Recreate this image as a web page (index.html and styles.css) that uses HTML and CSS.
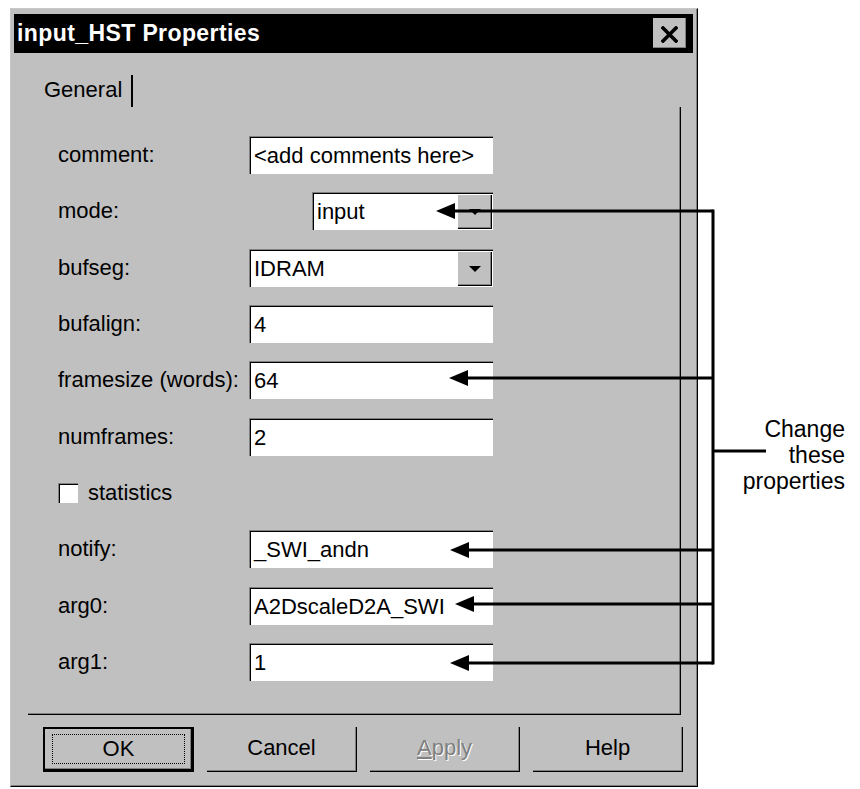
FILE: index.html
```html
<!DOCTYPE html>
<html lang="en">
<head>
  <meta charset="UTF-8" />
  <meta name="viewport" content="width=device-width, initial-scale=1.0" />
  <title>input_HST Properties</title>
  <link rel="stylesheet" href="styles.css">
</head>
<body>
  <div class="page">
    <div class="dialog">
      <div class="titlebar">
        <span class="title">input_HST Properties</span>
        <span class="close">
          <svg width="17" height="17" viewBox="0 0 17 17"><path d="M2 2 L15 15 M15 2 L2 15" stroke="#000" stroke-width="3.6" stroke-linecap="square"/></svg>
        </span>
      </div>
      <div class="tabs"><div class="tab">General</div></div>
      <div class="panel">
        <div class="form">
          <label>comment:</label>
          <div class="field">&lt;add comments here&gt;</div>

          <label>mode:</label>
          <div class="combo combo-short"><span class="combo-value">input</span><span class="combo-btn"><i class="caret"></i></span></div>

          <label>bufseg:</label>
          <div class="combo"><span class="combo-value">IDRAM</span><span class="combo-btn"><i class="caret"></i></span></div>

          <label>bufalign:</label>
          <div class="field">4</div>

          <label>framesize (words):</label>
          <div class="field">64</div>

          <label>numframes:</label>
          <div class="field">2</div>

          <div class="check-row"><span class="checkbox"></span><span>statistics</span></div>

          <label>notify:</label>
          <div class="field">_SWI_andn</div>

          <label>arg0:</label>
          <div class="field">A2DscaleD2A_SWI</div>

          <label>arg1:</label>
          <div class="field">1</div>
        </div>
      </div>
      <div class="buttons">
        <div class="btn btn-default"><span class="focus">OK</span></div>
        <div class="btn">Cancel</div>
        <div class="btn btn-disabled"><span><u>A</u>pply</span></div>
        <div class="btn">Help</div>
      </div>
    </div>
    <div class="note">Change<br>these<br>properties</div>

    <svg class="callouts" width="860" height="789" viewBox="0 0 860 789">
      <g stroke="#000" stroke-width="3" fill="none">
        <path d="M452 211 H713 M465 378 H713 M466 550 H713 M471 604 H713 M466 663 H713"/>
        <path d="M713 209.5 V664.5"/>
        <path d="M713 451 H766"/>
      </g>
      <g fill="#000">
        <polygon points="436,211 455,203 455,219"/>
        <polygon points="449,378 468,370 468,386"/>
        <polygon points="450,550 469,542 469,558"/>
        <polygon points="455,604 474,596 474,612"/>
        <polygon points="450,663 469,655 469,671"/>
      </g>
    </svg>
  </div>
</body>
</html>
```

FILE: styles.css
```css
body { margin: 0; background: #fff; font-family: "Liberation Sans", Arial, sans-serif; color: #000; }
.page { position: relative; width: 860px; height: 789px; display: flex; align-items: flex-start; }

.dialog { margin: 8px 0 0 10px; width: 688px; height: 779px; box-sizing: border-box; background: #c0c0c0; border: 1px solid; border-color: #c8c8c8 #000 #000 #c8c8c8; box-shadow: inset -1px -1px 0 #808080; padding: 5px 4px 0 3px; display: flex; flex-direction: column; }

.titlebar { height: 39px; flex: none; background: #000; color: #fff; display: flex; align-items: center; justify-content: space-between; padding: 0 6px 0 3px; }
.title { font-weight: bold; font-size: 23px; letter-spacing: 0.4px; }
.close { width: 34px; height: 31px; box-sizing: border-box; background: #c0c0c0; border-right: 1px solid #000; border-bottom: 1px solid #000; box-shadow: inset -1px -1px 0 #808080; display: flex; align-items: center; justify-content: center; padding-top: 2px; }

.tabs { height: 54px; flex: none; box-sizing: border-box; padding: 22px 0 0 14px; display: flex; }
.tab { width: 105px; height: 32px; box-sizing: border-box; padding-left: 16px; font-size: 22px; line-height: 30px; border-right: 2px solid #000; }

.panel { height: 608px; flex: none; box-sizing: border-box; margin: 0 12px 0 14px; border-right: 1px solid #000; border-bottom: 1px solid #000; box-shadow: inset -1px -1px 0 #808080; padding: 29px 0 0 30px; }

.form { display: grid; grid-template-columns: 191px 244px; grid-auto-rows: 38px; row-gap: 18.33px; align-items: center; font-size: 22px; }
.form label { white-space: nowrap; }

.field, .combo { height: 38px; box-sizing: border-box; background: #fff; border-top: 1px solid #808080; border-left: 1px solid #808080; box-shadow: inset 1px 1px 0 #000; }
.field { padding: 0 0 0 4px; line-height: 37px; white-space: nowrap; overflow: hidden; }

.combo { display: flex; align-items: stretch; padding: 2px 1px 1px 2px; }
.combo-short { width: 181px; justify-self: end; }
.combo-value { flex: 1; padding-left: 2px; line-height: 33px; }
.combo-btn { width: 34px; box-sizing: border-box; background: #c0c0c0; border-right: 1px solid #000; border-bottom: 1px solid #000; box-shadow: inset -1px -1px 0 #808080; display: flex; align-items: center; justify-content: center; }
.caret { width: 0; height: 0; border-left: 6px solid transparent; border-right: 6px solid transparent; border-top: 6px solid #000; margin-top: 1px; }

.check-row { grid-column: 1 / 3; display: flex; align-items: center; gap: 10px; }
.checkbox { width: 20px; height: 20px; box-sizing: border-box; background: #fff; border-top: 1px solid #808080; border-left: 1px solid #808080; box-shadow: inset 1px 1px 0 #000; }

.buttons { display: flex; gap: 13px; padding: 12px 0 0 29px; }
.btn { width: 150px; height: 45px; box-sizing: border-box; border-right: 1px solid #000; border-bottom: 1px solid #000; box-shadow: inset -1px -1px 0 #808080; font-size: 22px; display: flex; align-items: center; justify-content: center; padding-bottom: 2px; }
.btn-default { width: 151px; border: 2px solid #000; border-bottom-width: 3px; border-right-width: 3px; padding: 5px 6px 5px 7px; }
.focus { flex: 1; align-self: stretch; display: flex; align-items: center; justify-content: center; border: 1px dotted #000; }
.btn-disabled { color: #808080; text-shadow: 1px 1px 0 #fff; }

.note { flex: 1; margin-top: 416px; padding-right: 15px; text-align: right; font-size: 23px; line-height: 26px; }

.callouts { position: absolute; left: 0; top: 0; pointer-events: none; }
```
